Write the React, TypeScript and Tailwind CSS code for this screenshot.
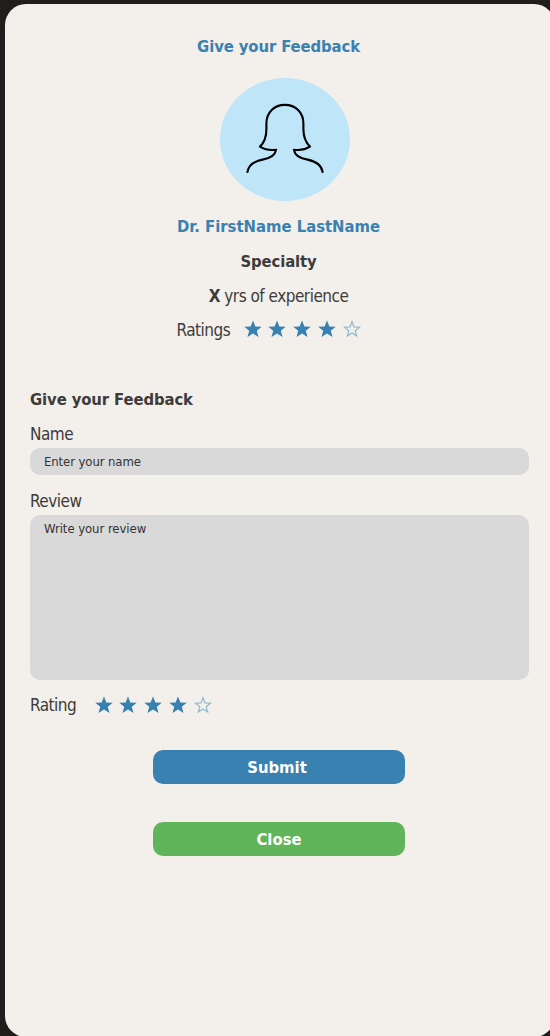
import React from "react";

function Star({ filled }: { filled: boolean }) {
  return (
    <svg className="h-[18px] w-[18px] shrink-0" viewBox="0 0 18 18">
      {filled ? (
        <path
          d="M9 0.6 L11.4 6.5 L17.7 6.7 L12.8 10.8 L14.5 17 L9 13.5 L3.5 17 L5.2 10.8 L0.3 6.7 L6.6 6.5 Z"
          fill="#3881b0"
        />
      ) : (
        <path
          d="M9 1.8 L10.9 6.9 L16.5 7.2 L12.2 10.7 L13.6 16 L9 13 L4.4 16 L5.8 10.7 L1.5 7.2 L7.1 6.9 Z"
          fill="none"
          stroke="#8fbad4"
          strokeWidth="1.2"
        />
      )}
    </svg>
  );
}

function Stars({ value, total = 5 }: { value: number; total?: number }) {
  return (
    <div className="flex gap-[6.75px]">
      {Array.from({ length: total }, (_, i) => (
        <Star key={i} filled={i < value} />
      ))}
    </div>
  );
}

function Avatar() {
  return (
    <div className="flex h-[123px] w-[130px] items-center justify-center rounded-[50%] bg-[#bee5f8]">
      <svg className="h-[123px] w-[130px]" viewBox="0 0 130 123" fill="none">
        <path
          d="M27.4 94 C28.4 87.6 33.5 83.4 42.5 81.6 C49.5 80.6 55 78.5 56.1 71.7 C50 72.6 44.2 71.2 40 68.6 C45.4 63.5 46.4 57.5 46.4 51 L46.4 45.5 C46.4 34.5 54.3 26.9 64.9 26.9 C75.5 26.9 83.4 34.5 83.4 45.5 L83.4 51 C83.4 57.5 84.6 63.5 90 68.6 C85.8 71.2 79.8 72.6 73.9 71.7 C74.8 78.5 80.5 80.6 87.5 81.6 C96.5 83.4 101.6 87.6 102.6 94"
          stroke="#000"
          strokeWidth="2.1"
          strokeLinecap="round"
          strokeLinejoin="round"
        />
      </svg>
    </div>
  );
}

export default function App() {
  return (
    <div className="h-[1036px] w-[550px] overflow-hidden bg-[#1f1e1d] pt-[3.5px] pl-[4.5px] font-['DejaVu_Sans_Condensed','DejaVu_Sans',sans-serif] text-[17px] leading-6 tracking-[-0.5px] text-[#3d3c3a] [font-stretch:condensed]">
      <main className="h-[1033px] w-[550px] rounded-[21px] bg-[#f3efea]">
        <section className="ml-[144px] flex w-[260px] flex-col items-center pt-[31px]">
          <h1 className="text-[16.5px] font-bold tracking-[-0.1px] text-[#3881b0]">
            Give your Feedback
          </h1>
          <div className="mt-[19.5px] ml-[12px]">
            <Avatar />
          </div>
          <h2 className="mt-[13.5px] text-[16.5px] font-bold tracking-normal whitespace-nowrap text-[#3881b0]">
            Dr. FirstName LastName
          </h2>
          <p className="mt-[11px] text-[16.5px] font-bold tracking-[-0.1px]">
            Specialty
          </p>
          <p className="mt-[10.5px] whitespace-nowrap">
            <b>X</b> yrs of experience
          </p>
          <div className="mt-[10px] flex w-[216px] items-center self-start pl-[28px]">
            <span className="w-[67px]">Ratings</span>
            <div className="-mt-[2px]">
              <Stars value={4} />
            </div>
          </div>
        </section>
        <form className="ml-[25.5px] w-[499px]" onSubmit={(e) => e.preventDefault()}>
          <h2 className="mt-[45.5px] text-[16.5px] font-bold tracking-[-0.1px]">
            Give your Feedback
          </h2>
          <label className="mt-[10.5px] block">Name</label>
          <input
            placeholder="Enter your name"
            className="mt-[2px] block h-[27px] w-full rounded-[10px] bg-[#d9d9d9] px-[14px] text-[13px] tracking-[-0.1px] placeholder:text-[#333] placeholder:opacity-100"
          />
          <label className="mt-[14px] block">Review</label>
          <textarea
            placeholder="Write your review"
            className="mt-[1.5px] block h-[165px] w-full resize-none rounded-[10px] bg-[#d9d9d9] px-[14px] pt-[5px] text-[13px] leading-[18px] tracking-[-0.06px] placeholder:text-[#333] placeholder:opacity-100"
          />
          <div className="mt-[13px] flex items-center">
            <span className="w-[64.5px]">Rating</span>
            <Stars value={4} />
          </div>
          <div className="ml-[123px] flex w-[252px] flex-col gap-[38px] pt-[33px] text-[16.5px] font-bold tracking-normal text-white">
            <button className="h-[34px] rounded-[10px] bg-[#3881b0] pt-[2px] pr-[4px]">Submit</button>
            <button className="h-[34px] rounded-[10px] bg-[#60b45a] pt-[2px]">Close</button>
          </div>
        </form>
      </main>
    </div>
  );
}
